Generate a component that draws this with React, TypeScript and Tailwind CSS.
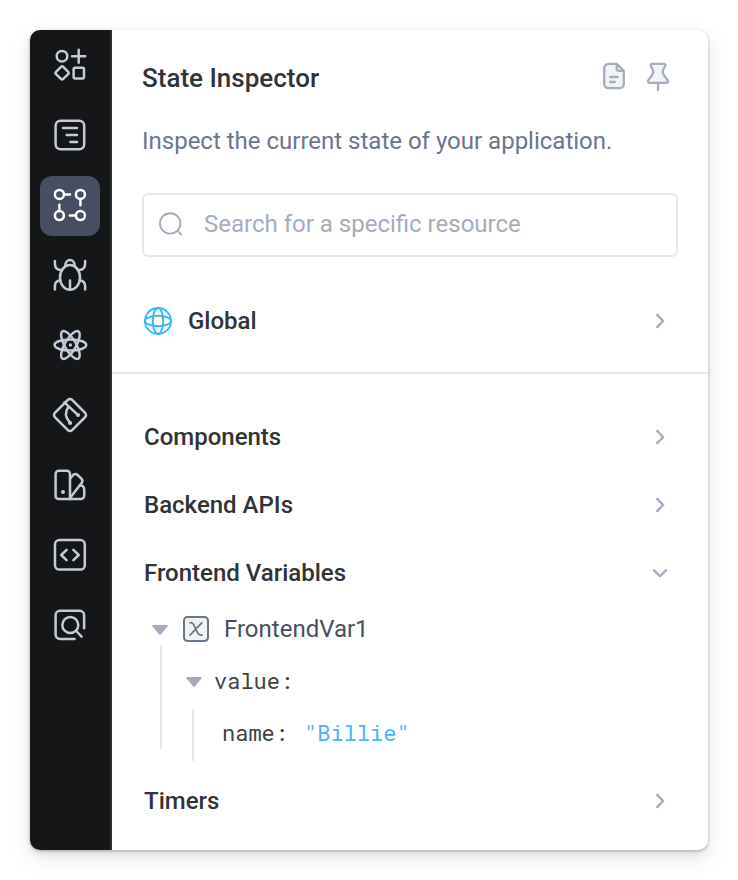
import type { ReactNode } from "react"
import { clsx } from "clsx"

type SidebarItem = {
  id: string
  icon: ReactNode
}

const sidebarItems: SidebarItem[] = [
  {
    id: "components",
    icon: (
      <>
        <circle cx="22" cy="20.2" r="5.3" />
        <path d="M32 20.2H45.2M38.7 13.7V26.7" />
        <rect x="17" y="31.8" width="10.2" height="10.2" rx="1.6" transform="rotate(45 22.1 36.9)" />
        <rect x="33.6" y="31.8" width="10.4" height="10.8" rx="1.5" />
      </>
    ),
  },
  {
    id: "outline",
    icon: (
      <>
        <rect x="15.6" y="14.7" width="28.6" height="28.6" rx="5" />
        <path d="M23 22H37M26.7 29H37M30.4 36H37" />
      </>
    ),
  },
  {
    id: "state",
    icon: (
      <>
        <circle cx="19.4" cy="18.4" r="4.5" />
        <circle cx="40.4" cy="18.4" r="4.5" />
        <circle cx="19.4" cy="39.6" r="4.5" />
        <circle cx="40.4" cy="39.6" r="4.5" />
        <path d="M24 18.4H30M40.4 23V29.2M35.8 39.6H29.8M19.4 35V28.8" />
      </>
    ),
  },
  {
    id: "debugger",
    icon: (
      <>
        <ellipse cx="30" cy="31.4" rx="10" ry="12.4" />
        <path d="M25.2 20C25.2 12 34.8 12 34.8 20M30 34.4V43" />
        <path d="M14.9 15V17.5C14.9 21.6 17 24 21 24M45.1 15V17.5C45.1 21.6 43 24 39 24" />
        <path d="M14.9 43.6V40C14.9 36.4 17 34.6 20.2 34.4M45.1 43.6V40C45.1 36.4 43 34.6 39.8 34.4" />
      </>
    ),
  },
  {
    id: "react",
    icon: (
      <>
        <ellipse cx="30.4" cy="29" rx="15.8" ry="5.6" />
        <ellipse cx="30.4" cy="29" rx="15.8" ry="5.6" transform="rotate(60 30.4 29)" />
        <ellipse cx="30.4" cy="29" rx="15.8" ry="5.6" transform="rotate(120 30.4 29)" />
        <circle cx="30.4" cy="29" r="1.7" fill="currentColor" stroke="none" />
      </>
    ),
  },
  {
    id: "git",
    icon: (
      <>
        <rect x="17.8" y="16.8" width="24.4" height="24.4" rx="3" transform="rotate(45 30 29)" />
        <path d="M24.4 16.4L37.6 28.6M28.6 20.4C24.6 26 25.4 31.6 29.8 36.4" />
        <circle cx="38" cy="29" r="2.1" fill="currentColor" stroke="none" />
        <circle cx="30.1" cy="37" r="2.1" fill="currentColor" stroke="none" />
      </>
    ),
  },
  {
    id: "theme",
    icon: (
      <>
        <path d="M30 43.1H18.8A3.2 3.2 0 0 1 15.6 39.9V17.9A3.2 3.2 0 0 1 18.8 14.7H26.8A3.2 3.2 0 0 1 30 17.9V43.1" />
        <path d="M30.2 22.4L33.2 19Q35.4 17 37.6 19L41.4 22.6Q43.4 24.8 41.6 27L30.2 41.8" />
        <path d="M39.8 29.6C42.6 29.2 44.2 30.8 44.2 33.6V39.5A3.6 3.6 0 0 1 40.6 43.1H29" />
        <circle cx="23" cy="36" r="2" fill="currentColor" stroke="none" />
      </>
    ),
  },
  {
    id: "code",
    icon: (
      <>
        <rect x="15" y="14" width="29.8" height="29.6" rx="4.4" />
        <path d="M26.6 23.8L21.2 29L26.6 34.2M33.4 23.8L38.8 29L33.4 34.2" />
      </>
    ),
  },
  {
    id: "search",
    icon: (
      <>
        <path d="M34.6 43H20A4.4 4.4 0 0 1 15.6 38.6V19.2A4.4 4.4 0 0 1 20 14.8H39.7A4.4 4.4 0 0 1 44.1 19.2V32.2" />
        <circle cx="30.3" cy="29" r="8" />
        <path d="M36.2 35L41.6 40.6" />
      </>
    ),
  },
]

function Sidebar({ active }: { active: string }) {
  return (
    <nav className="flex w-[82px] shrink-0 flex-col items-center gap-2.5 border-r-2 border-[#2e3235] bg-[#141618] pt-1.5">
      {sidebarItems.map((item) => (
        <button
          key={item.id}
          className={clsx(
            "size-[60px] rounded-xl",
            item.id === active ? "bg-[#474e61] text-white" : "text-[#c5cad6]"
          )}
        >
          <svg
            viewBox="0 0 60 60"
            className="size-[60px]"
            fill="none"
            stroke="currentColor"
            strokeWidth="2.5"
            strokeLinecap="round"
            strokeLinejoin="round"
          >
            {item.icon}
          </svg>
        </button>
      ))}
    </nav>
  )
}

function Chevron({ open = false }: { open?: boolean }) {
  return (
    <svg
      viewBox="0 0 20 20"
      className={clsx("size-5 text-[#a5adbd]", open && "rotate-90")}
      fill="none"
      stroke="currentColor"
      strokeWidth="2.4"
      strokeLinecap="round"
      strokeLinejoin="round"
    >
      <path d="M7.2 3.9L13.2 10L7.2 16.1" />
    </svg>
  )
}

function Caret() {
  return (
    <svg viewBox="0 0 16 10" className="mt-0.5 h-2.5 w-4 shrink-0" fill="#a5adbd">
      <path d="M1 0H15Q16.4 0 15.6 1.2L9 9.2Q8 10.4 7 9.2L.4 1.2Q-.4 0 1 0Z" />
    </svg>
  )
}

function Section({ title, icon, open }: { title: string; icon?: ReactNode; open?: boolean }) {
  return (
    <div className="flex h-[68px] items-center justify-between pr-[38px] pl-8">
      <div className="flex items-center gap-4">
        {icon}
        <span className="text-2xl font-medium text-[#2f3437]">{title}</span>
      </div>
      <Chevron open={open} />
    </div>
  )
}

function GlobeIcon() {
  return (
    <svg viewBox="0 0 28 28" className="size-7" fill="none" stroke="#2cb9ff" strokeWidth="1.9">
      <circle cx="14" cy="14" r="13" />
      <ellipse cx="14" cy="14" rx="5.2" ry="13" />
      <ellipse cx="14" cy="14" rx="13" ry="5.2" />
    </svg>
  )
}

function VariableTree() {
  return (
    <div className="h-40">
      <div className="flex h-11 items-center pl-10">
        <Caret />
        <svg viewBox="0 0 26 26" className="ml-[15px] size-[26px]" fill="none" stroke="#6a768b" strokeLinecap="round">
          <rect x="1" y="1" width="24" height="24" rx="3.4" fill="#eff1f3" strokeWidth="2" />
          <path
            d="M7 6.8C9.2 6.2 10 7.2 10.8 8.8L14.6 16.8C15.4 18.6 16.4 19.6 19 18.9M18.8 6.8L7 19.2"
            strokeWidth="1.7"
          />
        </svg>
        <span className="ml-[15px] text-2xl text-[#474e61]">FrontendVar1</span>
      </div>
      <div className="-mt-1.5 ml-12 h-[104px] border-l-2 border-[#e7e8ef] pt-2.5 font-['Roboto_Mono','Liberation_Mono',monospace] text-[22px] text-[#3f4245]">
        <div className="flex h-[52px] items-center pl-6">
          <Caret />
          <span className="ml-3 pb-0.5">value:</span>
        </div>
        <div className="mt-0.5 ml-[30px] h-[52px] border-l-2 border-[#e7e8ef] pl-7">
          <div className="flex h-12 items-center pb-0.5">
            <span>name:</span>
            <span className="ml-4 text-[#4cb4ff]">"Billie"</span>
          </div>
        </div>
      </div>
    </div>
  )
}

export default function App() {
  return (
    <div className="h-[880px] w-[738px] bg-white p-[30px] font-[Roboto,sans-serif]">
      <div className="flex h-[820px] overflow-hidden rounded-[10px] bg-white shadow-[0_1px_3px_rgba(0,0,0,0.26),0_4px_8px_rgba(0,0,0,0.08),0_8px_24px_rgba(0,0,0,0.09)]">
        <Sidebar active="state" />
        <main className="flex flex-1 flex-col">
          <header className="px-[30px] pt-8">
            <div className="flex h-8 justify-between">
              <h1 className="text-[26px] leading-8 font-medium text-[#2f3437]">State Inspector</h1>
              <div className="flex gap-4 pr-1.5 text-[#a5adbd]">
                <svg
                  viewBox="0 0 28 30"
                  className="h-[30px] w-7"
                  fill="#f1f3f5"
                  stroke="currentColor"
                  strokeWidth="2.3"
                  strokeLinecap="round"
                  strokeLinejoin="round"
                >
                  <path d="M16.8 1.9H8.4A4.2 4.2 0 0 0 4.2 6.1V22A4.2 4.2 0 0 0 8.4 26.2H19.6A4.2 4.2 0 0 0 23.8 22V8.8L16.8 1.9V6.8A2 2 0 0 0 18.8 8.8H23.6" />
                  <path d="M10.2 15H17.6M10.2 20H14.8" />
                </svg>
                <svg
                  viewBox="0 0 28 30"
                  className="h-[30px] w-7"
                  fill="#f1f3f5"
                  stroke="currentColor"
                  strokeWidth="2.3"
                  strokeLinecap="round"
                  strokeLinejoin="round"
                >
                  <path d="M8 1.9H20C21.6 1.9 21.8 3.6 20.8 4.9C18.2 8.2 18.4 11.6 20.6 14.2L23.2 17.4C24.6 19.2 24.2 20.9 22.4 20.9H5.6C3.8 20.9 3.4 19.2 4.8 17.4L7.4 14.2C9.6 11.6 9.8 8.2 7.2 4.9C6.2 3.6 6.4 1.9 8 1.9Z" />
                  <path d="M14 21V28" />
                </svg>
              </div>
            </div>
            <p className="mt-[31px] text-2xl leading-8 text-[#6a768b]">Inspect the current state of your application.</p>
            <div className="mt-9 flex h-16 items-center rounded-md border-2 border-[#e7e8ef] px-[15px] pb-0.5 text-[#a5adbd]">
              <svg viewBox="0 0 24 24" className="size-6" fill="none" stroke="currentColor" strokeWidth="1.9">
                <circle cx="11.2" cy="11.4" r="10.2" />
                <path d="M18.4 18.6L22.8 23" />
              </svg>
              <span className="ml-[21px] text-2xl">Search for a specific resource</span>
            </div>
          </header>
          <div className="mt-[30px] border-b-2 border-[#e7e8ef] pb-[17px]">
            <Section title="Global" icon={<GlobeIcon />} />
          </div>
          <div className="mt-[29px]">
            <Section title="Components" />
            <Section title="Backend APIs" />
            <Section title="Frontend Variables" open />
            <VariableTree />
            <Section title="Timers" />
          </div>
        </main>
      </div>
    </div>
  )
}
